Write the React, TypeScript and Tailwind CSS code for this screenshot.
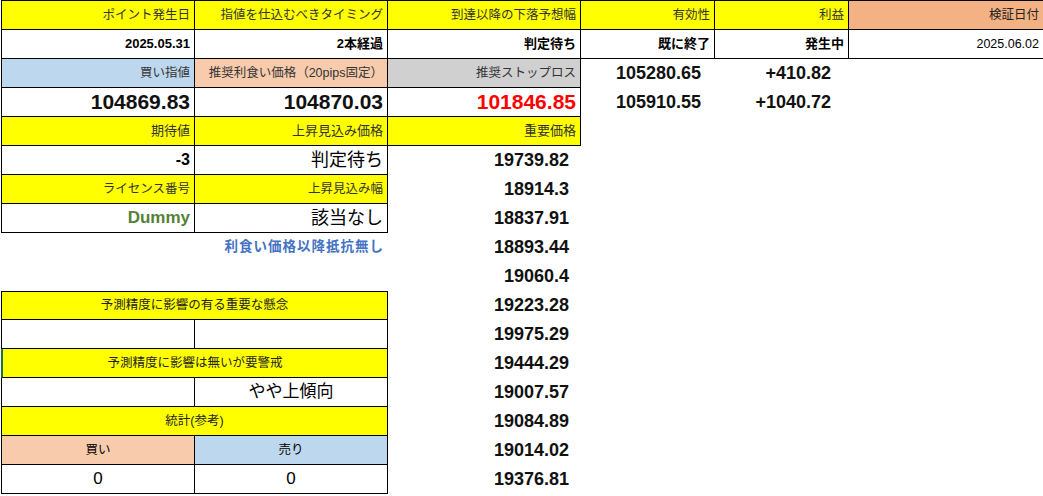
import React from "react";

const jp = { fontFamily: '"Liberation Sans", "Noto Sans CJK JP", sans-serif' };
const B = "border-r border-b border-black";

function C({ c = "", children, s = "" }: { c?: string; children?: React.ReactNode; s?: string }) {
  return <div className={`flex items-center overflow-hidden whitespace-nowrap px-1 ${c} ${s}`}>{children}</div>;
}

const hdr = "bg-[#ffff00] text-[#333] text-[12.5px] justify-end";
const yc = "bg-[#ffff00] text-[#222] text-[12.5px] justify-center col-span-2 border-l";
const num = "justify-end font-bold text-[18px] text-[#111]";
const big = "justify-end font-bold text-[21px] text-[#111]";

export default function App() {
  const right = [
    "19739.82", "18914.3", "18837.91", "18893.44", "19060.4", "19223.28", "19975.29",
    "19444.29", "19007.57", "19084.89", "19014.02", "19376.81",
  ];
  const rc = (i: number) => <C key={"r" + i} c={`${num} pr-[12px]`}>{right[i]}</C>;
  return (
    <div style={jp} className="w-[1043px] h-[496px] bg-white overflow-hidden">
      <div className="grid grid-cols-[194px_193px_193px_134px_134px_195px] grid-rows-[30px_repeat(16,29px)] ml-[1px]">
        <C c={`${hdr} ${B} border-t border-l`}>ポイント発生日</C>
        <C c={`${hdr} ${B} border-t`}>指値を仕込むべきタイミング</C>
        <C c={`${hdr} ${B} border-t`}>到達以降の下落予想幅</C>
        <C c={`${hdr} ${B} border-t`}>有効性</C>
        <C c={`${hdr} ${B} border-t`}>利益</C>
        <C c={`bg-[#f4b183] text-[#222] text-[12.5px] justify-end ${B} border-t`}>検証日付</C>

        <C c={`${B} border-l justify-end font-bold text-[13px]`}>2025.05.31</C>
        <C c={`${B} justify-end font-bold text-[13px]`}>2本経過</C>
        <C c={`${B} justify-end font-bold text-[13px]`}>判定待ち</C>
        <C c={`${B} justify-end font-bold text-[13px]`}>既に終了</C>
        <C c={`${B} justify-end font-bold text-[13px]`}>発生中</C>
        <C c={`${B} justify-end text-[12.5px]`}>2025.06.02</C>

        <C c={`bg-[#bdd7ee] ${B} border-l justify-end text-[12.5px] text-[#333]`}>買い指値</C>
        <C c={`bg-[#f8cbad] ${B} justify-end text-[12.5px] text-[#333]`}>推奨利食い価格（20pips固定）</C>
        <C c={`bg-[#d0d0d0] ${B} justify-end text-[12.5px] text-[#333]`}>推奨ストップロス</C>
        <C c={`${num} pr-[14px]`}>105280.65</C>
        <C c={`${num} pr-[18px]`}>+410.82</C>
        <C c="" />

        <C c={`${B} border-l ${big}`}>104869.83</C>
        <C c={`${B} ${big}`}>104870.03</C>
        <C c={`${B} ${big} !text-[#ff0000]`}>101846.85</C>
        <C c={`${num} pr-[14px]`}>105910.55</C>
        <C c={`${num} pr-[18px]`}>+1040.72</C>
        <C c="" />

        <C c={`${hdr} ${B} border-l text-[13px]`}>期待値</C>
        <C c={`${hdr} ${B} text-[13px]`}>上昇見込み価格</C>
        <C c={`${hdr} ${B} text-[13px]`}>重要価格</C>
        <C c="col-span-3" />

        <C c={`${B} border-l justify-end font-bold text-[16px]`}>-3</C>
        <C c={`${B} justify-end text-[18px]`}>判定待ち</C>
        {rc(0)}
        <C c="col-span-3" />

        <C c={`${hdr} ${B} border-l text-[11px]`}>ライセンス番号</C>
        <C c={`${hdr} ${B} text-[11px]`}>上昇見込み幅</C>
        {rc(1)}
        <C c="col-span-3" />

        <C c={`${B} border-l justify-end font-bold text-[17px] text-[#548235]`}>Dummy</C>
        <C c={`${B} justify-end text-[18px]`}>該当なし</C>
        {rc(2)}
        <C c="col-span-3" />

        <C c="col-span-2 justify-end font-bold text-[13.5px] text-[#4472c4] tracking-[1px]">利食い価格以降抵抗無し</C>
        {rc(3)}
        <C c="col-span-3" />

        <C c="col-span-2" />
        {rc(4)}
        <C c="col-span-3" />

        <C c={`${yc} ${B} border-t`}>予測精度に影響の有る重要な懸念</C>
        {rc(5)}
        <C c="col-span-3" />

        <C c={`${B} border-l`} />
        <C c={B} />
        {rc(6)}
        <C c="col-span-3" />

        <C c={`${yc} ${B} !border-l-[2px] !border-l-[#1e7145]`}>予測精度に影響は無いが要警戒</C>
        {rc(7)}
        <C c="col-span-3" />

        <C c={`${B} border-l`} />
        <C c={`${B} justify-center text-[17px]`}>やや上傾向</C>
        {rc(8)}
        <C c="col-span-3" />

        <C c={`${yc} ${B}`}>統計(参考)</C>
        {rc(9)}
        <C c="col-span-3" />

        <C c={`bg-[#f8cbad] ${B} border-l justify-center text-[12.5px]`}>買い</C>
        <C c={`bg-[#bdd7ee] ${B} justify-center text-[12.5px]`}>売り</C>
        {rc(10)}
        <C c="col-span-3" />

        <C c={`${B} border-l justify-center text-[17px]`}>0</C>
        <C c={`${B} justify-center text-[17px]`}>0</C>
        {rc(11)}
        <C c="col-span-3" />
      </div>
    </div>
  );
}
